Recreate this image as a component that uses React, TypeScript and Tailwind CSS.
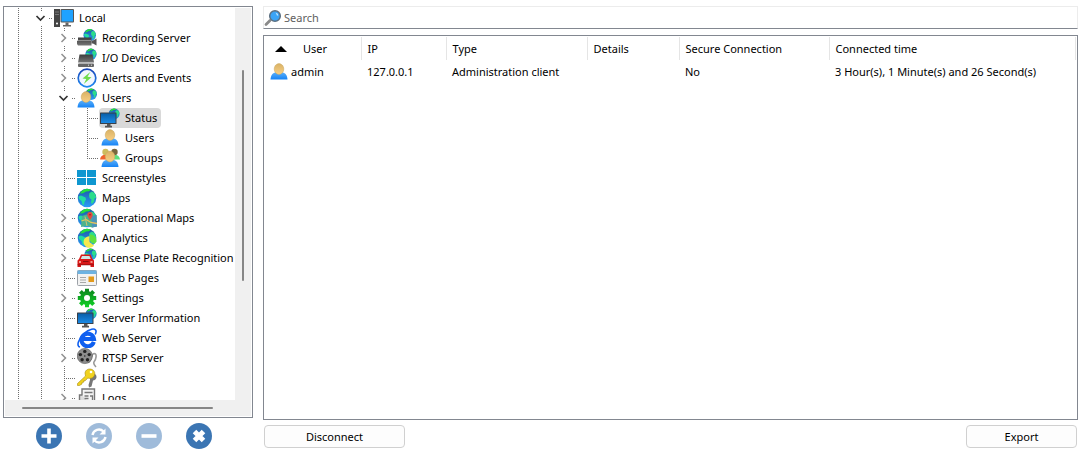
import React, { useState } from 'react';

type Guide = 'line' | 'tee' | 'end' | 'open' | 'closed';

interface TreeNode {
  label: string;
  icon: React.FC;
  guides: Guide[];
}

const iconClass = 'h-5 w-5 shrink-0';

// Gradients shared by all of the icons below
const IconDefs: React.FC = () => (
  <svg className="absolute h-0 w-0" aria-hidden="true">
    <defs>
      <linearGradient id="sea" x1="0" y1="0" x2="0" y2="1">
        <stop offset="0" stopColor="#1c5aa8" />
        <stop offset="1" stopColor="#2a9df8" />
      </linearGradient>
      <linearGradient id="shirt" x1="0" y1="0" x2="0" y2="1">
        <stop offset="0" stopColor="#5aaef8" />
        <stop offset="1" stopColor="#1583f5" />
      </linearGradient>
      <linearGradient id="skin" x1="0" y1="0" x2="0" y2="1">
        <stop offset="0" stopColor="#d9b266" />
        <stop offset="1" stopColor="#f8cf84" />
      </linearGradient>
      <linearGradient id="steel" x1="0" y1="0" x2="0" y2="1">
        <stop offset="0" stopColor="#3c3c3c" />
        <stop offset="1" stopColor="#777" />
      </linearGradient>
      <linearGradient id="screen" x1="0" y1="0" x2="0" y2="1">
        <stop offset="0" stopColor="#0a5fa8" />
        <stop offset="1" stopColor="#1a8ae6" />
      </linearGradient>
      <linearGradient id="gear" x1="0" y1="0" x2="0" y2="20" gradientUnits="userSpaceOnUse">
        <stop offset="0" stopColor="#0b7f1c" />
        <stop offset="1" stopColor="#12d628" />
      </linearGradient>
      <linearGradient id="ring" x1="0" y1="0" x2="0" y2="1">
        <stop offset="0" stopColor="#1846b8" />
        <stop offset="1" stopColor="#2089f2" />
      </linearGradient>
    </defs>
  </svg>
);

const GlobeShape: React.FC<{ transform?: string }> = ({ transform }) => (
  <g transform={transform}>
    <circle cx="10" cy="10" r="9.3" fill="url(#sea)" />
    <path d="M3 5.500C4.500 2.500 7 .9 10 .7L14 1.600 12 3.200 9 3.500 6.500 5 4.500 5.500Z" fill="#23e03c" />
    <path d="M1.500 8.500 4 7.500 8.500 9.500 9 11.500 7.500 14 7 17 5.500 16.500 4.500 13 2 11Z" fill="#21dfa0" />
    <path d="M12 7.500 12.500 5 15 3.500 18 5.500 19.200 9.500 17.500 10.500 17 13.500 15 16 14 14.500 14.500 11.500 12.500 10Z" fill="#2bdc8c" />
  </g>
);

const PersonShape: React.FC<{ transform?: string }> = ({ transform }) => (
  <g transform={transform}>
    <path d="M1.500 17.500C1.800 13 4 10.500 7 10.500H13C16 10.500 18.200 13 18.500 17.500Z" fill="url(#shirt)" />
    <ellipse cx="10" cy="7" rx="4.800" ry="5.400" fill="url(#skin)" stroke="#c9a65c" strokeWidth=".5" />
  </g>
);

const GlobeIcon: React.FC = () => (
  <svg className={iconClass} viewBox="0 0 20 20" aria-hidden="true"><GlobeShape /></svg>
);

const PersonIcon: React.FC = () => (
  <svg className={iconClass} viewBox="0 0 20 20" aria-hidden="true"><PersonShape /></svg>
);

const ComputerIcon: React.FC = () => (
  <svg className={iconClass} viewBox="0 0 20 20" aria-hidden="true">
    <rect x="0" y="1" width="6" height="18" fill="#444" />
    <path d="M1 4h4M1 6.500h4" stroke="#777" />
    <circle cx="3" cy="15.500" r="1" fill="#fff" />
    <rect x="6.500" y="1" width="13.500" height="13.500" rx="1" fill="#555" />
    <rect x="7.500" y="2" width="11.500" height="11.500" fill="#1fa2ff" />
    <path d="M11.500 14.500h3v2.500h2.500v1.500h-8V17h2.500Z" fill="#666" />
  </svg>
);

const CameraIcon: React.FC = () => (
  <svg className={iconClass} viewBox="0 0 20 20" aria-hidden="true">
    <GlobeShape transform="translate(6 .5) scale(.67)" />
    <path d="M1 9.500H14.500V17.500H1L0 16V13L1 12.500Z" fill="url(#steel)" />
    <path d="M1 12.500h13.500" stroke="#aaa" strokeWidth=".7" />
    <path d="M14.500 12.500 16 12.500 19.500 10.500v7L16 15.500H14.500Z" fill="#555" />
  </svg>
);

const DeviceIcon: React.FC = () => (
  <svg className={iconClass} viewBox="0 0 20 20" aria-hidden="true">
    <GlobeShape transform="translate(8 .2) scale(.6)" />
    <path d="M2.500 6.500h13L17 14.500H1Z" fill="url(#steel)" />
    <rect x="1" y="15.500" width="16" height="3.500" rx="1" fill="#666" />
    <path d="M11 17.200h1M14 17.200h1" stroke="#ddd" />
  </svg>
);

const BoltIcon: React.FC = () => (
  <svg className={iconClass} viewBox="0 0 20 20" aria-hidden="true">
    <circle cx="10" cy="10" r="8.800" fill="#f2f7ff" stroke="url(#ring)" strokeWidth="1.700" />
    <path d="M13.500 3.800 5.500 10.500 9.300 11 6.800 16 14.500 9.300 10.500 8.700Z" fill="#6fdc4c" />
  </svg>
);

const UserGlobeIcon: React.FC = () => (
  <svg className={iconClass} viewBox="0 0 20 20" aria-hidden="true">
    <GlobeShape transform="translate(8 0) scale(.62)" />
    <PersonShape transform="translate(-1 2)" />
  </svg>
);

const MonitorGlobeIcon: React.FC = () => (
  <svg className={iconClass} viewBox="0 0 20 20" aria-hidden="true">
    <GlobeShape transform="translate(8.200 0) scale(.59)" />
    <rect x="0" y="4.500" width="16.500" height="11.500" rx=".5" fill="#3a4048" />
    <rect x="1" y="5.500" width="14.500" height="9.500" fill="url(#screen)" />
    <path d="M7 16h3.500v1.800H12V19.500H5V17.800h2Z" fill="#555" />
  </svg>
);

const GroupIcon: React.FC = () => (
  <svg className={iconClass} viewBox="0 0 20 20" aria-hidden="true">
    <path d="M0 11.500C.5 8.500 2 7 6 6.500v5Z" fill="#f0622d" />
    <path d="M20 11.500C19.500 8.500 18 7 14 6.500v5Z" fill="#5be07f" />
    <ellipse cx="5.500" cy="4" rx="3.200" ry="3.300" fill="#cdbd5e" />
    <ellipse cx="14.500" cy="4" rx="3.200" ry="3.300" fill="#77663d" />
    <PersonShape transform="translate(0 1.500)" />
  </svg>
);

const TilesIcon: React.FC = () => (
  <svg className={iconClass} viewBox="0 0 20 20" aria-hidden="true">
    <path d="M0 2h9v7H0ZM10 2h9v7h-9ZM0 10h9v7H0ZM10 10h9v7h-9Z" fill="#0f97d0" />
  </svg>
);

const OperationalMapIcon: React.FC = () => (
  <svg className={iconClass} viewBox="0 0 20 20" aria-hidden="true">
    <GlobeShape />
    <path d="M5 8 9.500 6.500 14.500 8 19.500 7 20 18.500 15 19.500 10 18 4 19Z" fill="#4db28c" />
    <path d="M14.500 8 19.500 7 20 18.500 15 19.500Z" fill="#4a93ba" />
    <path d="M4.500 13 9 11.500 14 14.500 20 15.500" stroke="#e8c25a" strokeWidth="1.300" fill="none" />
    <path d="M8 8.500 10 18" stroke="#c9c27a" fill="none" />
    <path d="M13 12C11 9.500 10.300 8 10.300 6.800a2.700 2.700 0 0 1 5.400 0c0 1.200-.7 2.700-2.700 5.200Z" fill="#e24a40" />
    <circle cx="13" cy="6.800" r=".8" fill="#8e1c18" />
  </svg>
);

const AnalyticsIcon: React.FC = () => (
  <svg className={iconClass} viewBox="0 0 20 20" aria-hidden="true">
    <GlobeShape />
    <path d="M12.500 14V8.200A5.800 5.800 0 1 0 17 17.500Z" fill="#f5e94e" />
    <path d="M13 13.200V6.500C17 6.500 20 9.500 19.500 13.500L17.500 16Z" fill="#5fe03e" />
  </svg>
);

const CarIcon: React.FC = () => (
  <svg className={iconClass} viewBox="0 0 20 20" aria-hidden="true">
    <GlobeShape transform="translate(7 0) scale(.65)" />
    <path d="M4 6.500h9.500L15.500 11 17 12.500V19h-3.500v-2H4v2H.5v-6.500L2 11Z" fill="#d81818" />
    <path d="M5 8h7.500l1.200 3H3.700Z" fill="#cfe6e6" />
    <path d="M6 13.500h5.500" stroke="#8d0c0c" strokeWidth="1" />
    <path d="M2 14h2M13.500 14h2" stroke="#ffc0b0" strokeWidth="1.400" />
    <path d="M.5 16.800h16.500" stroke="#8d0c0c" strokeWidth=".8" />
  </svg>
);

const WebPageIcon: React.FC = () => (
  <svg className={iconClass} viewBox="0 0 20 20" aria-hidden="true">
    <rect x=".5" y="2.500" width="19" height="15" rx="1" fill="#f2f2f2" stroke="#9da2a8" />
    <path d="M.5 2.500h19v3.500H.5Z" fill="#6db3e2" />
    <path d="M3 9.500h6M3 12h6M3 14.500h6" stroke="#a8a8a8" />
    <rect x="11.500" y="8.500" width="5.500" height="5.500" fill="#e39a1c" />
  </svg>
);

const GearIcon: React.FC = () => (
  <svg className={iconClass} viewBox="0 0 20 20" aria-hidden="true">
    <circle cx="10" cy="10" r="5" strokeWidth="4" stroke="url(#gear)" fill="none" />
    <path d="M8 .8h4V5H8ZM8 15h4v4.200H8ZM.8 8H5v4H.8ZM15 8h4.200v4H15ZM2 4.800 4.800 2 7.500 4.700 4.700 7.500ZM15.200 2 18 4.800 15.300 7.500 12.500 4.700ZM2 15.200 4.700 12.500 7.500 15.300 4.800 18ZM15.300 12.500 18 15.200 15.200 18 12.500 15.300Z" fill="url(#gear)" />
  </svg>
);

const BrowserIcon: React.FC = () => (
  <svg className={iconClass} viewBox="0 0 20 20" aria-hidden="true">
    <path d="M16.800 13.800A6.300 6.300 0 1 1 17 11H6" fill="none" stroke="#0f5ff0" strokeWidth="4" />
    <path d="M3 19C-.8 18.500 1 11 7 5.500 12 .8 18.500-.5 19 3c.2 1.200-.3 2.500-.8 3.500" fill="none" stroke="#0f5ff0" strokeWidth="1.600" />
  </svg>
);

const ReelIcon: React.FC = () => (
  <svg className={iconClass} viewBox="0 0 20 20" aria-hidden="true">
    <path d="M11 14.500C14 15 14 6 17 5.500c3.500 0 2 6 0 8.500-1 2 .5 3.500 2 5" fill="none" stroke="#999" strokeWidth="1.600" />
    <circle cx="7.800" cy="8" r="7.600" fill="#8c8c8c" stroke="#555" strokeWidth=".6" />
    <g fill="#222">
      <circle cx="7.800" cy="3.400" r="1.700" />
      <circle cx="12.200" cy="6.600" r="1.700" />
      <circle cx="10.500" cy="11.800" r="1.700" />
      <circle cx="5.100" cy="11.800" r="1.700" />
      <circle cx="3.400" cy="6.600" r="1.700" />
      <circle cx="7.800" cy="8" r=".8" />
    </g>
  </svg>
);

const KeyIcon: React.FC = () => (
  <svg className={iconClass} viewBox="0 0 20 20" aria-hidden="true">
    <path d="M13 6C16 4 20 6 19.500 9.500c-.4 2-2 3-3.500 3L14.500 18.500 12 19.500 11.500 17 13 12Z" fill="#777" />
    <path d="M8 5C8.500 1.500 12 .2 15 1.500c3 1.300 3.500 4.500 1.800 7-1.500 2-4 2.300-6 1.500L8.500 12.500 7 12.500 7 14 5 14.500 5 16 2.500 17.500.5 17.500.5 15.500 8.500 8Z" fill="#f0d21f" stroke="#a98b10" strokeWidth=".6" />
    <circle cx="14" cy="4" r="1.300" fill="#fff" />
  </svg>
);

const LogIcon: React.FC = () => (
  <svg className={iconClass} viewBox="0 0 20 20" aria-hidden="true">
    <path d="M5 1H17.500V19H5Z" fill="#f4f4f4" stroke="#777" strokeWidth="1.400" />
    <path d="M5 7H2.500V16a3 3 0 0 0 3 3H16" fill="#ddd" stroke="#777" strokeWidth="1.400" />
    <path d="M7.500 4.500h8M7.500 8h4M7.500 10.500h4M7.500 13h4" stroke="#777" strokeWidth="1.300" />
    <path d="M13 8h2.500v5" stroke="#777" strokeWidth="1.300" fill="none" />
  </svg>
);

const SearchIcon: React.FC = () => (
  <svg className="h-[18px] w-[18px] shrink-0" viewBox="0 0 18 18" aria-hidden="true">
    <path d="M2 15.500 6 11.500" stroke="#8a8a8a" strokeWidth="2.800" strokeLinecap="round" />
    <circle cx="11" cy="7" r="5.300" fill="#3aa4f6" stroke="#5c6f80" strokeWidth="1.500" />
    <path d="M11.500 3.800Q14 4 14.300 6.800L12.800 6.300Q12.800 5 11.500 3.800Z" fill="#d3eeff" />
  </svg>
);

const GuideCell: React.FC<{ kind: Guide }> = ({ kind }) => {
  const isToggle = kind === 'open' || kind === 'closed';
  const cell = (
    <svg className="h-5 w-[23px] shrink-0" viewBox="0 0 23 20" fill="none" aria-hidden="true">
      <g stroke="#6e6e6e" strokeDasharray="1 1" shapeRendering="crispEdges">
        {kind === 'end' && <path d="M11.500 0V10" />}
        {(kind === 'line' || kind === 'tee') && <path d="M11.500 0V20" />}
        {(kind === 'tee' || kind === 'end') && <path d="M11 10.500H23" />}
        {isToggle && <path d="M11.500 0V3M11.500 18V20M19 10.500H23" />}
      </g>
      {kind === 'open' && <path d="M6.500 8 10.500 12 14.500 8" stroke="#333" strokeWidth="1.700" />}
      {kind === 'closed' && <path d="M8.500 6 12.500 10 8.500 14" stroke="#909090" strokeWidth="1.500" />}
    </svg>
  );

  if (!isToggle) return cell;
  return (
    <button type="button" aria-label={kind === 'open' ? 'Collapse' : 'Expand'} className="shrink-0">
      {cell}
    </button>
  );
};

const TREE: TreeNode[] = [
  { label: 'Local', icon: ComputerIcon, guides: ['line', 'open'] },
  { label: 'Recording Server', icon: CameraIcon, guides: ['line', 'line', 'closed'] },
  { label: 'I/O Devices', icon: DeviceIcon, guides: ['line', 'line', 'closed'] },
  { label: 'Alerts and Events', icon: BoltIcon, guides: ['line', 'line', 'closed'] },
  { label: 'Users', icon: UserGlobeIcon, guides: ['line', 'line', 'open'] },
  { label: 'Status', icon: MonitorGlobeIcon, guides: ['line', 'line', 'line', 'tee'] },
  { label: 'Users', icon: PersonIcon, guides: ['line', 'line', 'line', 'tee'] },
  { label: 'Groups', icon: GroupIcon, guides: ['line', 'line', 'line', 'end'] },
  { label: 'Screenstyles', icon: TilesIcon, guides: ['line', 'line', 'tee'] },
  { label: 'Maps', icon: GlobeIcon, guides: ['line', 'line', 'tee'] },
  { label: 'Operational Maps', icon: OperationalMapIcon, guides: ['line', 'line', 'closed'] },
  { label: 'Analytics', icon: AnalyticsIcon, guides: ['line', 'line', 'closed'] },
  { label: 'License Plate Recognition', icon: CarIcon, guides: ['line', 'line', 'closed'] },
  { label: 'Web Pages', icon: WebPageIcon, guides: ['line', 'line', 'tee'] },
  { label: 'Settings', icon: GearIcon, guides: ['line', 'line', 'closed'] },
  { label: 'Server Information', icon: MonitorGlobeIcon, guides: ['line', 'line', 'tee'] },
  { label: 'Web Server', icon: BrowserIcon, guides: ['line', 'line', 'tee'] },
  { label: 'RTSP Server', icon: ReelIcon, guides: ['line', 'line', 'closed'] },
  { label: 'Licenses', icon: KeyIcon, guides: ['line', 'line', 'tee'] },
  { label: 'Logs', icon: LogIcon, guides: ['line', 'line', 'closed'] },
];

const STATUS_INDEX = 5;

const NavigationTree: React.FC = () => {
  const [selected, setSelected] = useState(STATUS_INDEX);

  return (
    <nav className="grid min-h-0 flex-1 grid-cols-[minmax(0,1fr)_16px] grid-rows-[minmax(0,1fr)_16px] border border-[#828790] p-px">
      <ul className="overflow-hidden pl-0.5">
        {TREE.map((node, index) => (
          <li key={index} className="flex h-5 items-center">
            {node.guides.map((kind, i) => <GuideCell key={i} kind={kind} />)}
            <button
              type="button"
              onClick={() => setSelected(index)}
              className={`flex h-5 shrink-0 items-center gap-[5px] rounded-sm pr-1 pl-px whitespace-nowrap ${index === selected ? 'bg-[#d9d9d9]' : ''}`}
            >
              <node.icon />
              {node.label}
            </button>
          </li>
        ))}
      </ul>
      <div className="flex justify-center bg-[#f0f0f0] pt-[62px]">
        <div className="h-[64%] w-0.5 rounded-full bg-[#868686]" />
      </div>
      <div className="col-span-2 flex items-center bg-[#f0f0f0] pl-[17px]">
        <div className="h-0.5 w-[191px] rounded-full bg-[#868686]" />
      </div>
    </nav>
  );
};

const RoundButton: React.FC<{ label: string; disabled?: boolean; children: React.ReactNode }> = ({ label, disabled, children }) => (
  <button
    type="button"
    aria-label={label}
    disabled={disabled}
    className="flex h-[26px] w-[26px] items-center justify-center rounded-full bg-[#3b75b3] disabled:bg-[#9fbbda]"
  >
    <svg className="h-[26px] w-[26px]" viewBox="0 0 26 26" fill="none" stroke="#fff" aria-hidden="true">{children}</svg>
  </button>
);

const COLUMNS = ['User', 'IP', 'Type', 'Details', 'Secure Connection', 'Connected time'];

const SESSIONS = [
  { user: 'admin', ip: '127.0.0.1', type: 'Administration client', details: '', secure: 'No', time: '3 Hour(s), 1 Minute(s) and 26 Second(s)' },
];

const SessionTable: React.FC = () => (
  <div className="min-h-0 flex-1 overflow-hidden border border-[#828790] p-px">
    <table className="w-full table-fixed border-collapse text-left">
      <colgroup>
        <col className="w-[96px]" />
        <col className="w-[85px]" />
        <col className="w-[141px]" />
        <col className="w-[92px]" />
        <col className="w-[150px]" />
        <col />
      </colgroup>
      <thead>
        <tr className="h-[23px]">
          {COLUMNS.map((column, index) => (
            <th key={column} className="border-r border-[#e5e5e5] p-0 pl-1.5 font-normal whitespace-nowrap">
              {index === 0 ? (
                <span className="flex items-center gap-4 pl-1">
                  <svg className="h-1.5 w-3" viewBox="0 0 12 6" aria-hidden="true"><path d="M6 0 12 6H0Z" fill="#000" /></svg>
                  {column}
                </span>
              ) : column}
            </th>
          ))}
        </tr>
      </thead>
      <tbody>
        {SESSIONS.map(session => (
          <tr key={session.user} className="h-6">
            <td className="p-0 pl-1">
              <span className="flex items-center gap-0.5"><PersonIcon />{session.user}</span>
            </td>
            <td className="p-0 pl-1.5">{session.ip}</td>
            <td className="p-0 pl-1.5">{session.type}</td>
            <td className="p-0 pl-1.5">{session.details}</td>
            <td className="p-0 pl-1.5">{session.secure}</td>
            <td className="p-0 pl-1.5">{session.time}</td>
          </tr>
        ))}
      </tbody>
    </table>
  </div>
);

const App: React.FC = () => {
  const [query, setQuery] = useState('');

  return (
    <div className="flex h-screen gap-2.5 bg-white pt-1.5 pr-0.5 pl-[3px] font-['Noto_Sans','Open_Sans',sans-serif] text-[11px] leading-4 text-black">
      <IconDefs />
      <aside className="flex w-[250px] shrink-0 flex-col gap-[5px] pb-1">
        <NavigationTree />
        <div className="flex gap-6 pl-[33px]">
          <RoundButton label="Add"><path d="M13 5.500v15M5.500 13h15" strokeWidth="3.600" /></RoundButton>
          <RoundButton label="Refresh" disabled>
            <path d="M6.500 12A6.500 6.500 0 0 1 17.500 8.500M19.500 14A6.500 6.500 0 0 1 8.500 17.500" strokeWidth="2.400" />
            <path d="M19.500 5.500V11.500H13.500ZM6.500 20.500V14.500H12.500Z" fill="#fff" stroke="none" />
          </RoundButton>
          <RoundButton label="Remove" disabled><path d="M5.500 13h15" strokeWidth="3.600" /></RoundButton>
          <RoundButton label="Delete"><path d="M8.500 8.500 17.500 17.500M17.500 8.500 8.500 17.500" strokeWidth="5" /></RoundButton>
        </div>
      </aside>
      <main className="flex min-w-0 flex-1 flex-col pb-[5px]">
        <label className="flex h-[23px] shrink-0 items-center gap-0.5 border border-[#ececec] border-b-[#828790]">
          <SearchIcon />
          <input
            type="text"
            aria-label="Search"
            placeholder="Search"
            className="min-w-0 flex-1 bg-transparent outline-none placeholder:text-[#606060]"
            value={query}
            onChange={(e) => setQuery(e.target.value)}
          />
        </label>
        <div className="flex min-h-0 flex-1 flex-col pt-[6px]">
          <SessionTable />
        </div>
        <div className="flex justify-between px-px pt-[5px]">
          <button type="button" className="h-[23px] w-[141px] rounded border border-[#d0d0d0] bg-[#fdfdfd]">Disconnect</button>
          <button type="button" className="h-[23px] w-[111px] rounded border border-[#d0d0d0] bg-[#fdfdfd]">Export</button>
        </div>
      </main>
    </div>
  );
};

export default App;
